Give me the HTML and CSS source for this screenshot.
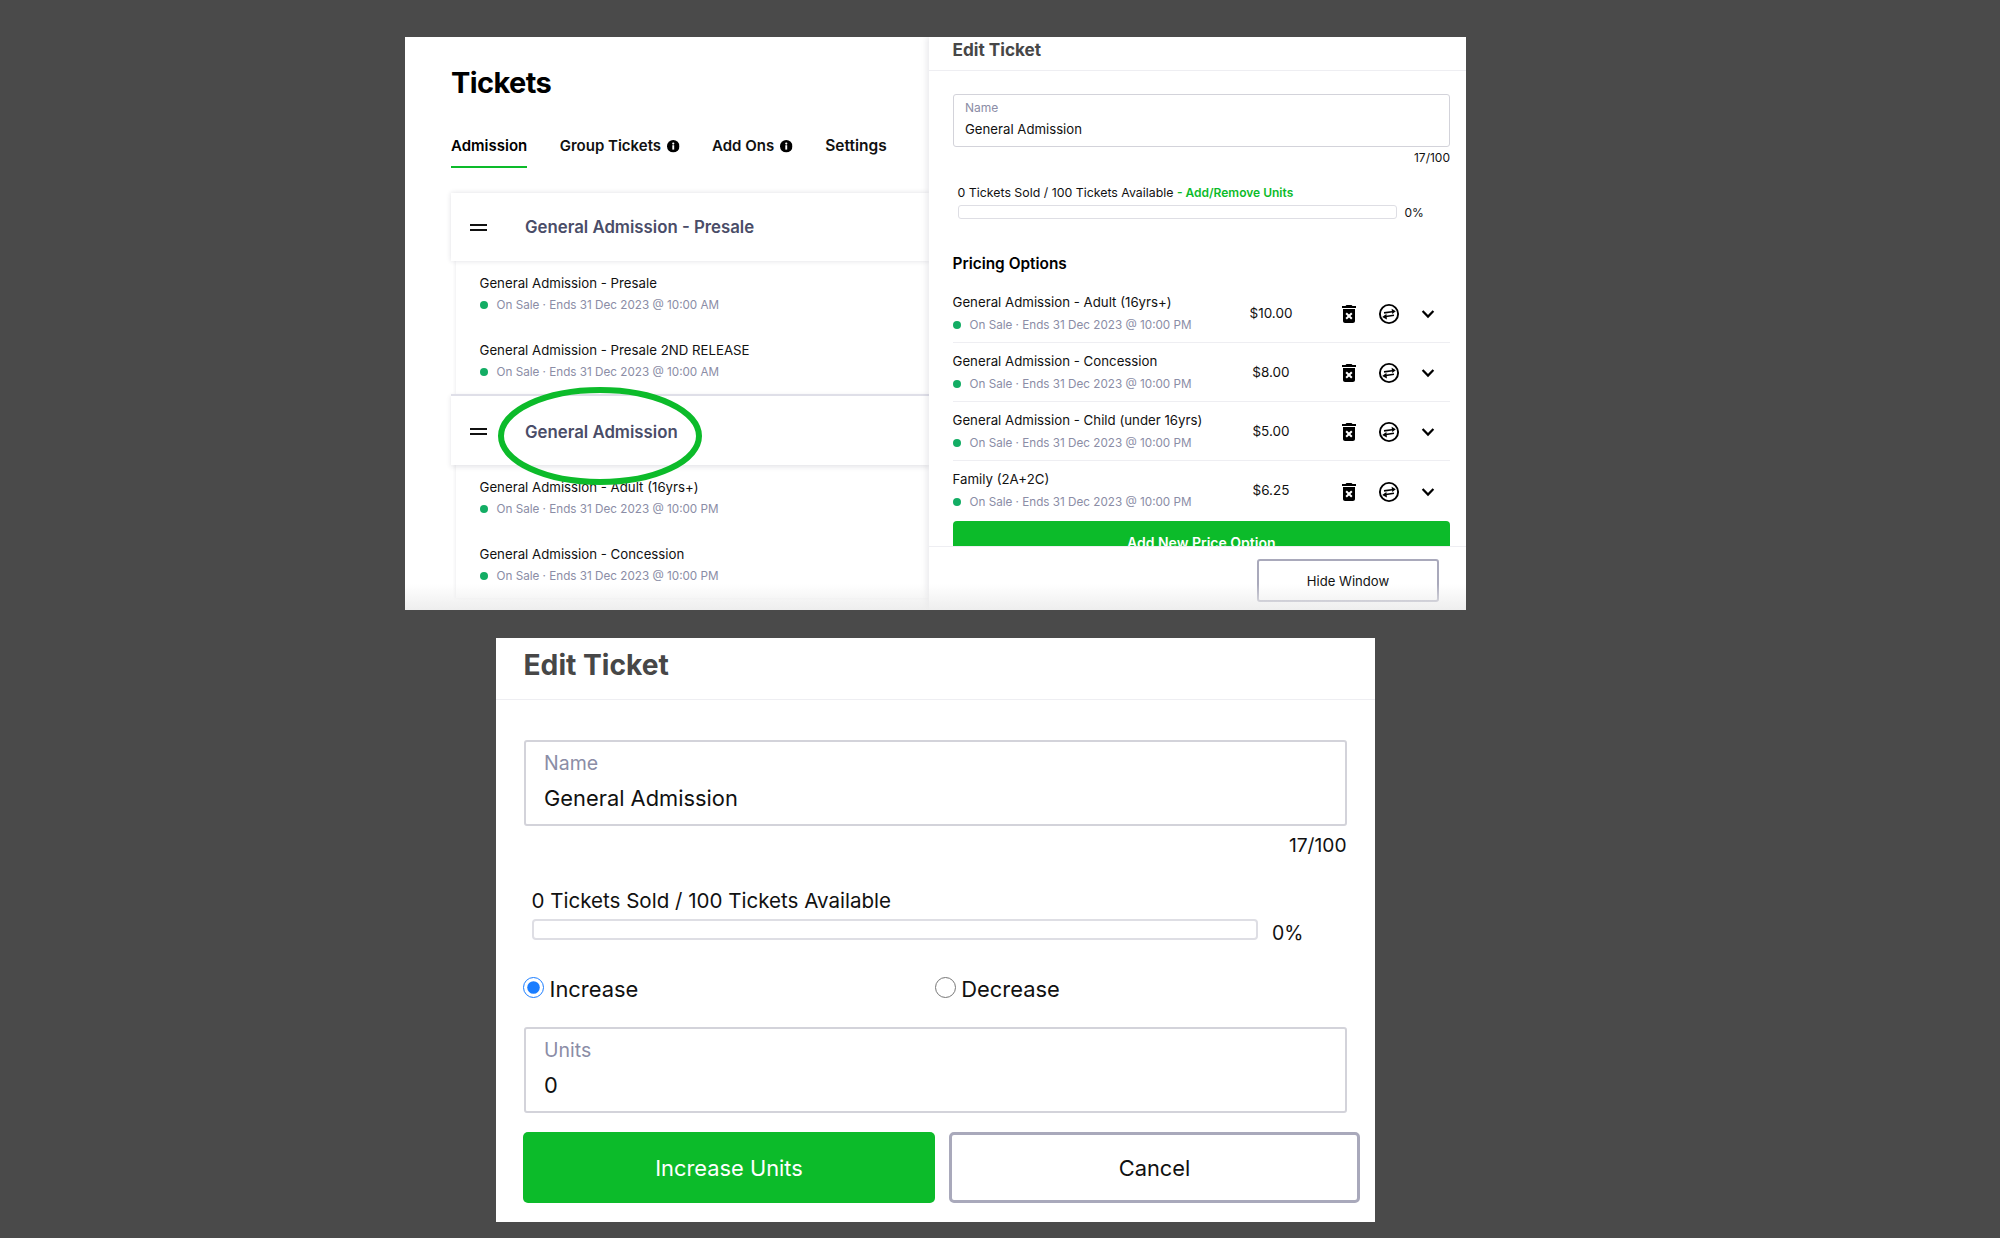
FILE: index.html
```html
<!DOCTYPE html>
<html lang="en">
<head>
<meta charset="utf-8">
<title>Edit Ticket</title>
<link rel="stylesheet" href="styles.css">
</head>
<body>
<svg class="defs" width="0" height="0" aria-hidden="true">
  <symbol id="i-trash" viewBox="0 0 24 24"><path d="M6 19c0 1.1.9 2 2 2h8c1.1 0 2-.9 2-2V7H6v12zm2.46-7.12l1.41-1.41L12 12.59l2.12-2.12 1.41 1.41L13.41 14l2.12 2.12-1.41 1.41L12 15.41l-2.12 2.12-1.41-1.41L10.59 14l-2.13-2.12zM15.5 4l-1-1h-5l-1 1H5v2h14V4z" fill="#000"/></symbol>
  <symbol id="i-swap" viewBox="0 0 24 24"><circle cx="12" cy="12" r="9.1" fill="none" stroke="#000" stroke-width="1.9"/><path d="M7 10.9l8-1.2M17 13.3l-8 1.2" stroke="#000" stroke-width="1.6" fill="none"/><path d="M18.8 9.2l-4.2-2.5.7 5.4zM5.2 15l4.2-3 .5 5.4z" fill="#000"/></symbol>
  <symbol id="i-chev" viewBox="0 0 24 24"><path d="M6.6 9l5.4 5.6L17.4 9" fill="none" stroke="#000" stroke-width="2.2"/></symbol>
  <symbol id="i-info" viewBox="0 0 12 12"><circle cx="6" cy="6" r="6" fill="#000"/><rect x="5.1" y="5" width="1.8" height="4.2" fill="#fff"/><circle cx="6" cy="3.4" r="1.05" fill="#fff"/></symbol>
</svg>

<main class="top-panel">
  <section class="left">
    <h1 class="page-title">Tickets</h1>
    <nav class="tabs">
      <a class="tab tab-active">Admission</a>
      <a class="tab">Group Tickets <svg class="info"><use href="#i-info"/></svg></a>
      <a class="tab">Add Ons <svg class="info"><use href="#i-info"/></svg></a>
      <a class="tab tab-wide">Settings</a>
    </nav>

    <div class="group-head group-first"><span class="handle"></span><span class="group-name">General Admission - Presale</span></div>
    <ul class="group-body group-body-first">
      <li><div class="item-name">General Admission - Presale</div><div class="item-sub"><i class="dot"></i>On Sale · Ends 31 Dec 2023 @ 10:00 AM</div></li>
      <li><div class="item-name">General Admission - Presale 2ND RELEASE</div><div class="item-sub"><i class="dot"></i>On Sale · Ends 31 Dec 2023 @ 10:00 AM</div></li>
    </ul>

    <div class="group-head"><span class="handle"></span><span class="group-name">General Admission</span></div>
    <ul class="group-body">
      <li><div class="item-name">General Admission - Adult (16yrs+)</div><div class="item-sub"><i class="dot"></i>On Sale · Ends 31 Dec 2023 @ 10:00 PM</div></li>
      <li><div class="item-name">General Admission - Concession</div><div class="item-sub"><i class="dot"></i>On Sale · Ends 31 Dec 2023 @ 10:00 PM</div></li>
    </ul>

    <svg class="circle-mark" viewBox="0 0 210 106" aria-hidden="true">
      <ellipse cx="105" cy="53" rx="99" ry="46" fill="none" stroke="#0cbb2a" stroke-width="6"/>
    </svg>
  </section>

  <section class="right">
    <h2 class="drawer-title">Edit Ticket</h2>
    <div class="drawer-scroll">
      <div class="field">
        <div class="field-label">Name</div>
        <div class="field-value">General Admission</div>
      </div>
      <div class="counter">17/100</div>
      <div class="sold">0 Tickets Sold / 100 Tickets Available <a class="units-link">- Add/Remove Units</a></div>
      <div class="progress"><div class="bar"></div><span class="pct">0%</span></div>
      <h3 class="pricing-title">Pricing Options</h3>
      <div class="price-row">
        <div class="price-info"><div class="item-name">General Admission - Adult (16yrs+)</div><div class="item-sub"><i class="dot"></i>On Sale · Ends 31 Dec 2023 @ 10:00 PM</div></div>
        <div class="price">$10.00</div>
        <svg class="act act-trash"><use href="#i-trash"/></svg><svg class="act act-swap"><use href="#i-swap"/></svg><svg class="act act-chev"><use href="#i-chev"/></svg>
      </div>
      <div class="price-row">
        <div class="price-info"><div class="item-name">General Admission - Concession</div><div class="item-sub"><i class="dot"></i>On Sale · Ends 31 Dec 2023 @ 10:00 PM</div></div>
        <div class="price">$8.00</div>
        <svg class="act act-trash"><use href="#i-trash"/></svg><svg class="act act-swap"><use href="#i-swap"/></svg><svg class="act act-chev"><use href="#i-chev"/></svg>
      </div>
      <div class="price-row">
        <div class="price-info"><div class="item-name">General Admission - Child (under 16yrs)</div><div class="item-sub"><i class="dot"></i>On Sale · Ends 31 Dec 2023 @ 10:00 PM</div></div>
        <div class="price">$5.00</div>
        <svg class="act act-trash"><use href="#i-trash"/></svg><svg class="act act-swap"><use href="#i-swap"/></svg><svg class="act act-chev"><use href="#i-chev"/></svg>
      </div>
      <div class="price-row price-row-last">
        <div class="price-info"><div class="item-name">Family (2A+2C)</div><div class="item-sub"><i class="dot"></i>On Sale · Ends 31 Dec 2023 @ 10:00 PM</div></div>
        <div class="price">$6.25</div>
        <svg class="act act-trash"><use href="#i-trash"/></svg><svg class="act act-swap"><use href="#i-swap"/></svg><svg class="act act-chev"><use href="#i-chev"/></svg>
      </div>
      <button class="add-btn">Add New Price Option</button>
    </div>
    <div class="drawer-foot"><button class="hide-btn">Hide Window</button></div>
  </section>
</main>

<section class="bottom-panel">
  <h2 class="big-title">Edit Ticket</h2>
  <div class="big-body">
    <div class="big-field">
      <div class="big-label">Name</div>
      <div class="big-value">General Admission</div>
    </div>
    <div class="big-counter">17/100</div>
    <div class="big-sold">0 Tickets Sold / 100 Tickets Available</div>
    <div class="big-progress"><div class="big-bar"></div><span class="big-pct">0%</span></div>
    <div class="radios">
      <label class="radio"><input type="radio" name="mode" checked>Increase</label>
      <label class="radio"><input type="radio" name="mode">Decrease</label>
    </div>
    <div class="big-field units-field">
      <div class="big-label">Units</div>
      <div class="big-value">0</div>
    </div>
    <div class="big-actions">
      <button class="primary">Increase Units</button>
      <button class="secondary">Cancel</button>
    </div>
  </div>
</section>
</body>
</html>
```
FILE: styles.css
```css
* { box-sizing: border-box; }
html, body { margin: 0; height: 100%; }
body {
  background: #4a4a4a;
  font-family: Inter, "Liberation Sans", sans-serif;
  color: #000;
  display: flex;
  flex-direction: column;
  align-items: center;
  padding: 37px 129px 0 0;
  overflow: hidden;
}
.defs { position: absolute; }
h1, h2, h3, ul { margin: 0; padding: 0; }
ul { list-style: none; }
button { font-family: inherit; cursor: pointer; }

/* top screenshot */
.top-panel {
  width: 1061px;
  height: 573px;
  flex: none;
  background: #fff;
  display: flex;
  overflow: hidden;
  position: relative;
}
.top-panel::after {
  content: "";
  position: absolute;
  left: 0; right: 0; bottom: 0;
  height: 26px;
  background: linear-gradient(rgba(236,236,236,0), rgba(236,236,236,.9));
  pointer-events: none;
}
.left {
  width: 524px;
  flex: none;
  padding-left: 46px;
  position: relative;
  overflow: hidden;
}
.page-title {
  margin-top: 28px;
  font-size: 29px;
  line-height: 36px;
  font-weight: 700;
  letter-spacing: -0.6px;
}
.tabs {
  display: flex;
  gap: 32.5px;
  margin-top: 33px;
}
.tab {
  font-size: 15px;
  font-weight: 600;
  line-height: 24px;
  height: 34px;
  color: #111;
  display: flex;
  align-items: center;
  padding-bottom: 10px;
  gap: 6px;
  white-space: nowrap;
}
.tab-active { border-bottom: 2.5px solid #0cbb2a; color: #000; padding-bottom: 8px; }
.tab-wide { font-size: 15.5px; }
.info { width: 12.5px; height: 12.5px; margin-top: 1px; }

.group-head {
  height: 71px;
  padding-top: 2px;
  display: flex;
  align-items: center;
  background: #fff;
  border-top: 2px solid #dfdfe8;
  box-shadow: 0 2px 5px rgba(30,30,60,.12);
  position: relative;
  padding-left: 19px;
}
.group-first { margin-top: 25px; height: 68px; border-top: 0; padding-top: 0; box-shadow: 0 0 5px rgba(30,30,60,.14); }
.handle {
  width: 17px;
  height: 7px;
  border-top: 2px solid #111;
  border-bottom: 2px solid #111;
  flex: none;
  margin-right: 38px;
}
.group-name { font-size: 16.8px; font-weight: 600; color: #4a4d68; white-space: nowrap; }
.group-body {
  margin-left: 5px;
  padding: 12px 0 13px 23.5px;
  display: flex;
  flex-direction: column;
  gap: 26px;
  box-shadow: -1px 0 3px rgba(30,30,60,.07);
}
.item-name { font-size: 13.25px; line-height: 20px; color: #111; white-space: nowrap; }
.item-sub {
  font-size: 11.7px;
  line-height: 18px;
  margin-top: 3px;
  color: #8b8da6;
  display: flex;
  align-items: center;
  white-space: nowrap;
}
.dot {
  width: 8px;
  height: 8px;
  border-radius: 50%;
  background: #13ad64;
  margin-right: 9px;
  flex: none;
}
.circle-mark {
  position: absolute;
  left: 90px;
  top: 345.5px;
  width: 210px;
  height: 106px;
  pointer-events: none;
}

.right {
  flex: 1;
  min-width: 0;
  display: flex;
  flex-direction: column;
  box-shadow: -2px 0 6px rgba(30,30,60,.1);
  position: relative;
  background: #fff;
}
.drawer-title {
  height: 34px;
  flex: none;
  padding-left: 23.5px;
  font-size: 17.2px;
  font-weight: 700;
  line-height: 26px;
  color: #474747;
  border-bottom: 1px solid #eeeef2;
}
.drawer-scroll { height: 475px; flex: none; padding: 23px 16px 0 23.5px; overflow: hidden; }
.field { height: 53px; border: 1.5px solid #d3d3da; border-radius: 3px; padding: 5px 11.5px 0; }
.field-label { font-size: 12px; line-height: 16px; color: #8b8da6; }
.field-value { font-size: 13.2px; line-height: 20px; margin-top: 3px; color: #111; }
.counter { font-size: 12px; line-height: 16px; margin-top: 3px; text-align: right; color: #111; }
.sold { font-size: 12.35px; line-height: 17px; margin-top: 18px; padding-left: 5px; color: #111; white-space: nowrap; }
.units-link { color: #0cbb2a; font-size: 12px; font-weight: 600; }
.progress { display: flex; align-items: center; gap: 8px; margin: 3px 0 0 5px; }
.bar { width: 439px; height: 14px; border: 1.5px solid #dedee4; border-radius: 3px; }
.pct { font-size: 12px; line-height: 14px; color: #111; margin-top: 2px; }
.pricing-title { font-size: 15.4px; font-weight: 600; line-height: 20px; margin-top: 34px; margin-bottom: 10px; }
.price-row {
  display: flex;
  align-items: center;
  height: 59px;
  border-bottom: 1px solid #eeeef2;
}
.price-row-last { border-bottom: 0; }
.price-info { width: 288.5px; flex: none; margin-top: -1px; }
.price-info .item-sub { margin-top: 4px; }
.price { width: 60px; text-align: center; font-size: 13.5px; color: #111; margin-top: -1px; flex: none; }
.act { width: 24px; height: 24px; flex: none; margin-top: 2px; }
.act-trash { margin-left: 36px; }
.act-swap { margin-left: 16px; }
.act-chev { margin-left: 15px; }
.add-btn {
  display: block;
  width: 100%;
  height: 42px;
  margin-top: 1px;
  background: #0cbb2a;
  color: #fff;
  border: 0;
  border-radius: 4px;
  font-size: 14px;
  font-weight: 600;
}
.drawer-foot {
  flex: 1;
  border-top: 1px solid #eeeef2;
  display: flex;
  justify-content: flex-end;
  padding: 12px 27px 0 0;
}
.hide-btn {
  width: 182px;
  height: 43px;
  background: #fff;
  border: 2px solid #a9a9bb;
  border-radius: 3px;
  font-size: 13.1px;
  color: #111;
}

/* bottom screenshot */
.bottom-panel {
  width: 879px;
  flex: none;
  margin-top: 28px;
  background: #fff;
}
.big-title {
  height: 62px;
  padding-left: 27.5px;
  font-size: 28.2px;
  font-weight: 700;
  line-height: 54px;
  color: #474747;
  border-bottom: 1px solid #eeeef2;
}
.big-body { padding: 40px 28.5px 19px 28px; }
.big-field { height: 86px; border: 2px solid #d3d3da; border-radius: 3px; padding: 9px 18px 0; }
.big-label { font-size: 19.5px; line-height: 24px; color: #8b8da6; }
.big-value { font-size: 21.85px; line-height: 28px; margin-top: 9px; color: #111; }
.big-counter { font-size: 19.2px; line-height: 24px; margin-top: 7px; text-align: right; color: #111; }
.big-sold { font-size: 20.55px; line-height: 24px; margin-top: 32px; padding-left: 7.5px; color: #111; }
.big-progress { display: flex; align-items: flex-start; gap: 14px; margin: 6px 0 0 8px; }
.big-bar { width: 726px; height: 21px; border: 2px solid #dedee4; border-radius: 4px; }
.big-pct { font-size: 19.5px; line-height: 24px; color: #111; margin-top: 2px; }
.radios { display: flex; margin: 32px 0 26px -1px; }
.radio { width: 412.5px; display: flex; align-items: flex-start; gap: 5.5px; font-size: 21.9px; line-height: 24px; color: #111; }
.radio input { width: 21px; height: 21px; margin: 0; accent-color: #1a7dff; flex: none; }
.big-actions { display: grid; grid-template-columns: 412px 411px; gap: 14px; margin: 19px 0 0 -1px; width: 837px; }
.primary, .secondary { height: 71px; border-radius: 5px; font-size: 21.85px; }
.primary { background: #0cbb2a; color: #fff; border: 0; }
.secondary { background: #fff; color: #111; border: 3.5px solid #a9a9bb; }
```
